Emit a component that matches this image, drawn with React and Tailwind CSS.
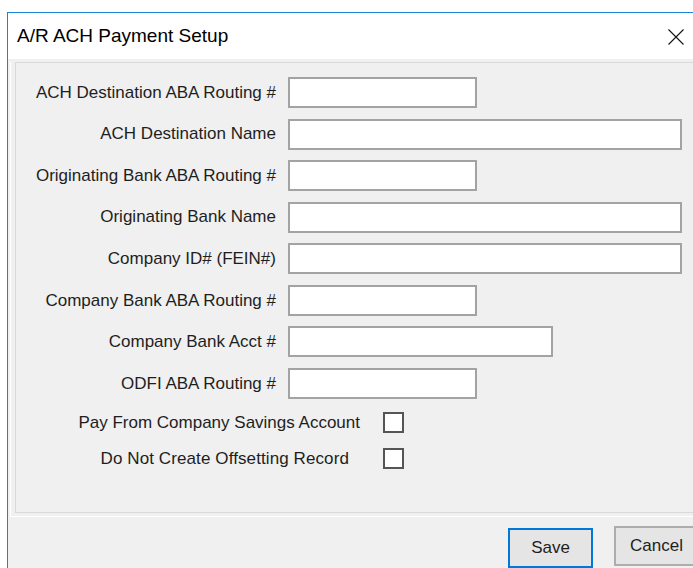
import React from 'react';

// field rows: label + input width
const fields = [
    { label: 'ACH Destination ABA Routing #', width: 'w-[189px]' },
    { label: 'ACH Destination Name', width: 'w-[394px]' },
    { label: 'Originating Bank ABA Routing #', width: 'w-[189px]' },
    { label: 'Originating Bank Name', width: 'w-[394px]' },
    { label: 'Company ID# (FEIN#)', width: 'w-[394px]' },
    { label: 'Company Bank ABA Routing #', width: 'w-[189px]' },
    { label: 'Company Bank Acct #', width: 'w-[265px]' },
    { label: 'ODFI ABA Routing #', width: 'w-[189px]' },
];

const checks = [
    { label: 'Pay From Company Savings Account', pad: 'pr-[23px]' },
    { label: 'Do Not Create Offsetting Record', pad: 'pr-[34px] tracking-[0.1px]' },
];

const FieldRow = ({ label, width }) => (
    <div className="flex items-center h-[31px]">
        <div className="w-[260px] text-right text-[17px] text-[#1e1e1e] whitespace-nowrap">{label}</div>
        <div className={`${width} h-[31px] ml-[12px] bg-white border-2 border-[#a3a3a3]`} />
    </div>
);

const CheckRow = ({ label, pad }) => (
    <div className="flex items-center h-[21px]">
        <div className={`w-[367px] text-right text-[17px] text-[#1e1e1e] whitespace-nowrap ${pad}`}>{label}</div>
        <div className="w-[21px] h-[21px] bg-white border-2 border-[#555555]" />
    </div>
);

export default function App() {
    return (
        <div className="w-[693px] h-[568px] bg-white overflow-hidden pt-[12px] pl-[7px] font-['Liberation_Sans',Arial,sans-serif]">
            <div className="w-[686px] h-[600px] border-l border-t border-[#1883d7] bg-[#f0f0f0]">
                {/* title bar */}
                <div className="h-[46px] bg-white flex items-center pl-[9px] pr-[9px]">
                    <span className="text-[19px] text-black">A/R ACH Payment Setup</span>
                    <svg className="ml-auto mt-[2px]" width="16" height="16" viewBox="0 0 16 16">
                        <path d="M0.5 0.5L15.5 15.5M15.5 0.5L0.5 15.5" stroke="#111" strokeWidth="1.1" fill="none" />
                    </svg>
                </div>

                {/* form body */}
                <div className="pt-[3px] pl-[2px]">
                    <div className="border-l border-b border-white pl-[4px] pb-[3px]">
                        <div className="h-[451px] border-l border-t border-b border-[#d9d9d9] pt-[14px] flex flex-col">
                            <div className="flex flex-col gap-[10.57px]">
                                {fields.map((f) => (
                                    <FieldRow key={f.label} label={f.label} width={f.width} />
                                ))}
                            </div>
                            <div className="flex flex-col gap-[15.5px] mt-[13px]">
                                {checks.map((c) => (
                                    <CheckRow key={c.label} label={c.label} pad={c.pad} />
                                ))}
                            </div>
                        </div>
                    </div>
                </div>

                {/* buttons */}
                <div className="flex items-start pl-[500px] pt-[10px] gap-[21px]">
                    <button className="w-[85px] h-[40px] mt-[1px] shrink-0 bg-[#e5e5e5] border-2 border-[#0078d7] text-[17px] text-[#1e1e1e]">Save</button>
                    <button className="w-[85px] h-[40px] -mt-[1px] shrink-0 bg-[#e5e5e5] border-2 border-[#adadad] text-[17px] text-[#1e1e1e]">Cancel</button>
                </div>
            </div>
        </div>
    );
}
